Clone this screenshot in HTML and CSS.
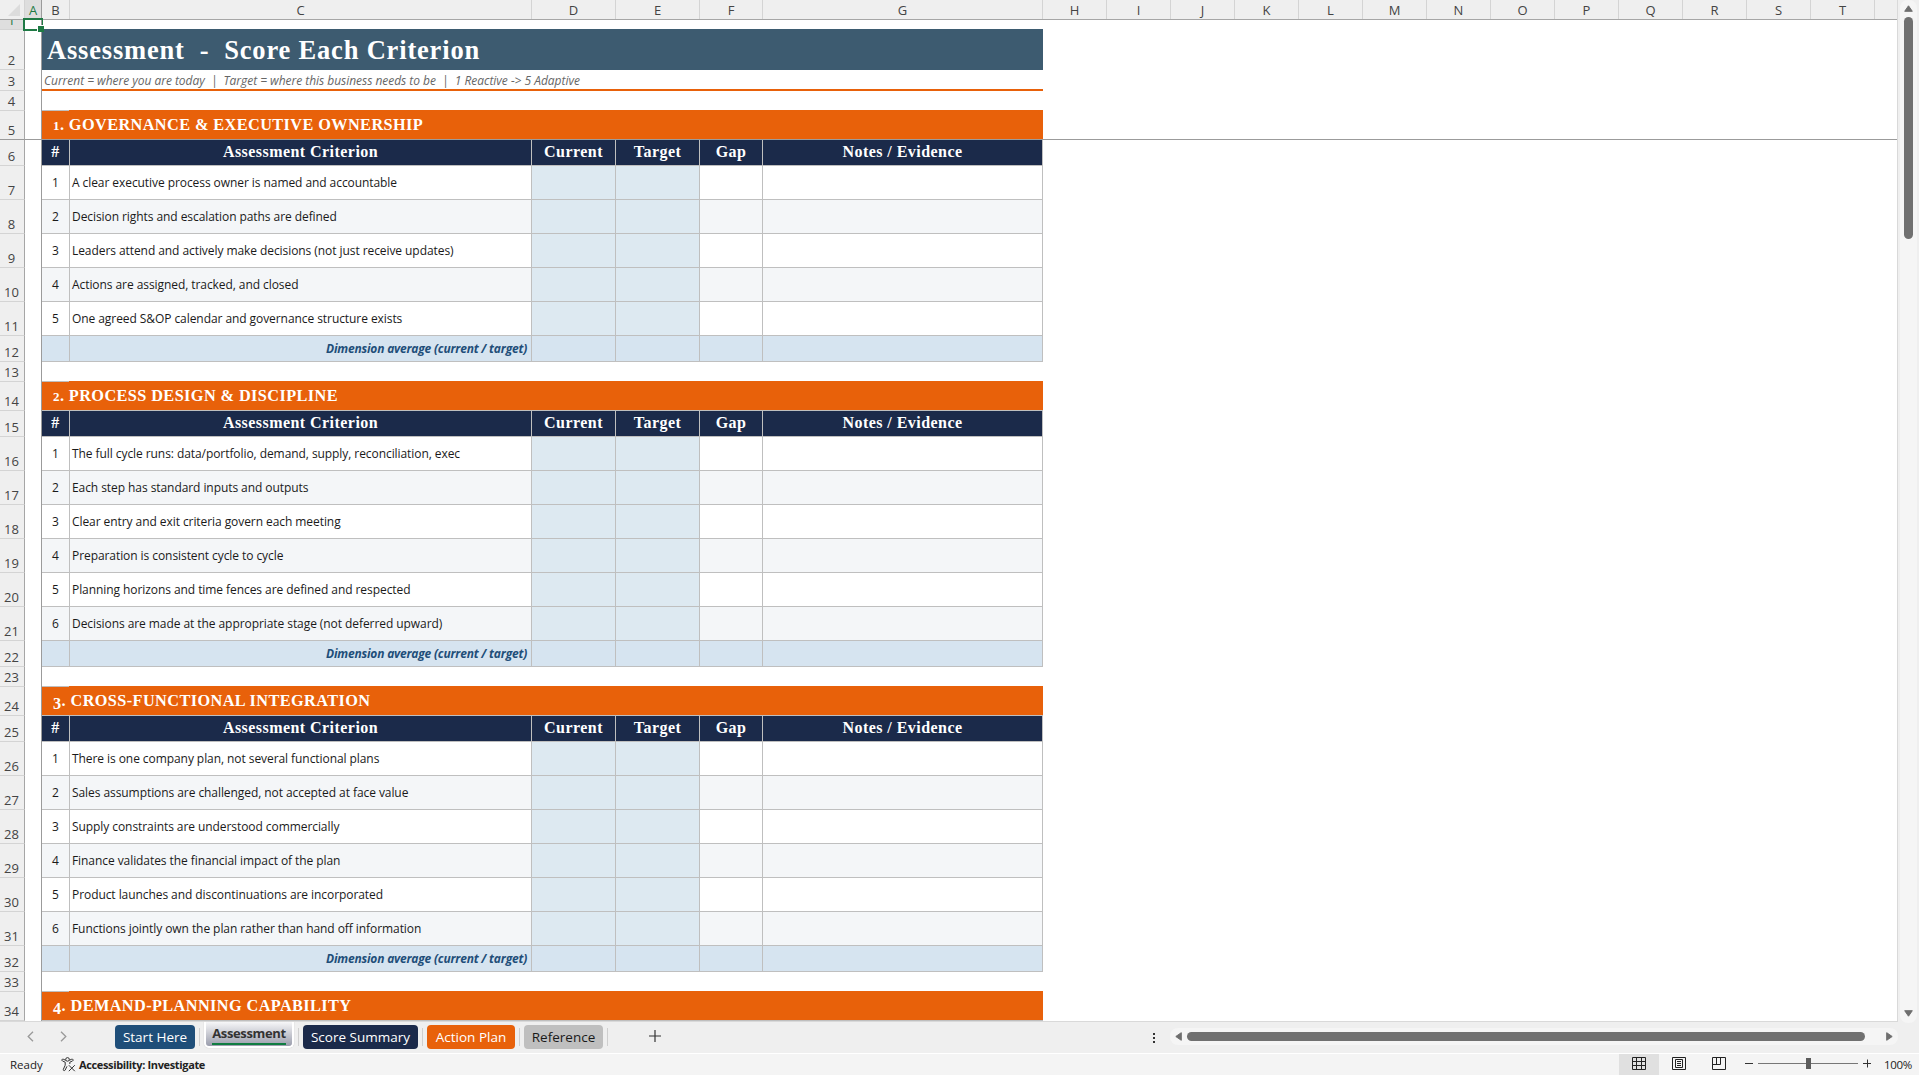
FILE: index.html
```html
<!DOCTYPE html>
<html lang="en">
<head>
<meta charset="utf-8">
<title>Assessment</title>
<link rel="stylesheet" href="styles.css">
</head>
<body>
<div class="app">
<div class="workspace">
<div class="sheet">
<div class="colheads">
<div class="corner"><svg width="12" height="12" viewBox="0 0 12 12"><path d="M12 0V12H0Z" fill="#dcdcdc"/></svg></div>
<div class="ch active">A</div><div class="ch">B</div><div class="ch">C</div><div class="ch">D</div><div class="ch">E</div><div class="ch">F</div><div class="ch">G</div><div class="ch">H</div><div class="ch">I</div><div class="ch">J</div><div class="ch">K</div><div class="ch">L</div><div class="ch">M</div><div class="ch">N</div><div class="ch">O</div><div class="ch">P</div><div class="ch">Q</div><div class="ch">R</div><div class="ch">S</div><div class="ch">T</div><div class="ch last"></div>
</div>
<div class="row first"><div class="rh active">1</div><div class="a"></div><div class="wide"></div></div>
<div class="row title"><div class="rh">2</div><div class="a"></div><div class="wide"><span class="t">Assessment&nbsp; -&nbsp; Score Each Criterion</span></div></div>
<div class="row note"><div class="rh">3</div><div class="a"></div><div class="wide"><span class="t">Current = where you are today&nbsp; |&nbsp; Target = where this business needs to be&nbsp; |&nbsp; 1 Reactive -&gt; 5 Adaptive</span></div></div>
<div class="row gap"><div class="rh">4</div><div class="a"></div><div class="wide"></div></div>
<div class="row section freeze"><div class="rh">5</div><div class="a"></div><div class="wide"><span class="t"><span class="num low">1</span>. GOVERNANCE &amp; EXECUTIVE OWNERSHIP</span></div><div class="rest"></div></div>
<div class="row head"><div class="rh">6</div><div class="a"></div><div class="c">#</div><div class="c">Assessment Criterion</div><div class="c">Current</div><div class="c">Target</div><div class="c">Gap</div><div class="c">Notes / Evidence</div></div>
<div class="row item"><div class="rh">7</div><div class="a"></div><div class="c n">1</div><div class="c text">A clear executive process owner is named and accountable</div><div class="c in"></div><div class="c in"></div><div class="c"></div><div class="c"></div></div>
<div class="row item alt"><div class="rh">8</div><div class="a"></div><div class="c n">2</div><div class="c text">Decision rights and escalation paths are defined</div><div class="c in"></div><div class="c in"></div><div class="c"></div><div class="c"></div></div>
<div class="row item"><div class="rh">9</div><div class="a"></div><div class="c n">3</div><div class="c text">Leaders attend and actively make decisions (not just receive updates)</div><div class="c in"></div><div class="c in"></div><div class="c"></div><div class="c"></div></div>
<div class="row item alt"><div class="rh">10</div><div class="a"></div><div class="c n">4</div><div class="c text">Actions are assigned, tracked, and closed</div><div class="c in"></div><div class="c in"></div><div class="c"></div><div class="c"></div></div>
<div class="row item"><div class="rh">11</div><div class="a"></div><div class="c n">5</div><div class="c text">One agreed S&amp;OP calendar and governance structure exists</div><div class="c in"></div><div class="c in"></div><div class="c"></div><div class="c"></div></div>
<div class="row avg"><div class="rh">12</div><div class="a"></div><div class="c"></div><div class="c label">Dimension average (current / target)</div><div class="c"></div><div class="c"></div><div class="c"></div><div class="c"></div></div>
<div class="row gap"><div class="rh">13</div><div class="a"></div><div class="wide"></div></div>
<div class="row section"><div class="rh">14</div><div class="a"></div><div class="wide"><span class="t"><span class="num low">2</span>. PROCESS DESIGN &amp; DISCIPLINE</span></div></div>
<div class="row head"><div class="rh">15</div><div class="a"></div><div class="c">#</div><div class="c">Assessment Criterion</div><div class="c">Current</div><div class="c">Target</div><div class="c">Gap</div><div class="c">Notes / Evidence</div></div>
<div class="row item"><div class="rh">16</div><div class="a"></div><div class="c n">1</div><div class="c text">The full cycle runs: data/portfolio, demand, supply, reconciliation, exec</div><div class="c in"></div><div class="c in"></div><div class="c"></div><div class="c"></div></div>
<div class="row item alt"><div class="rh">17</div><div class="a"></div><div class="c n">2</div><div class="c text">Each step has standard inputs and outputs</div><div class="c in"></div><div class="c in"></div><div class="c"></div><div class="c"></div></div>
<div class="row item"><div class="rh">18</div><div class="a"></div><div class="c n">3</div><div class="c text">Clear entry and exit criteria govern each meeting</div><div class="c in"></div><div class="c in"></div><div class="c"></div><div class="c"></div></div>
<div class="row item alt"><div class="rh">19</div><div class="a"></div><div class="c n">4</div><div class="c text">Preparation is consistent cycle to cycle</div><div class="c in"></div><div class="c in"></div><div class="c"></div><div class="c"></div></div>
<div class="row item"><div class="rh">20</div><div class="a"></div><div class="c n">5</div><div class="c text">Planning horizons and time fences are defined and respected</div><div class="c in"></div><div class="c in"></div><div class="c"></div><div class="c"></div></div>
<div class="row item alt"><div class="rh">21</div><div class="a"></div><div class="c n">6</div><div class="c text">Decisions are made at the appropriate stage (not deferred upward)</div><div class="c in"></div><div class="c in"></div><div class="c"></div><div class="c"></div></div>
<div class="row avg"><div class="rh">22</div><div class="a"></div><div class="c"></div><div class="c label">Dimension average (current / target)</div><div class="c"></div><div class="c"></div><div class="c"></div><div class="c"></div></div>
<div class="row gap"><div class="rh">23</div><div class="a"></div><div class="wide"></div></div>
<div class="row section"><div class="rh">24</div><div class="a"></div><div class="wide"><span class="t"><span class="num drop">3</span>. CROSS-FUNCTIONAL INTEGRATION</span></div></div>
<div class="row head"><div class="rh">25</div><div class="a"></div><div class="c">#</div><div class="c">Assessment Criterion</div><div class="c">Current</div><div class="c">Target</div><div class="c">Gap</div><div class="c">Notes / Evidence</div></div>
<div class="row item"><div class="rh">26</div><div class="a"></div><div class="c n">1</div><div class="c text">There is one company plan, not several functional plans</div><div class="c in"></div><div class="c in"></div><div class="c"></div><div class="c"></div></div>
<div class="row item alt"><div class="rh">27</div><div class="a"></div><div class="c n">2</div><div class="c text">Sales assumptions are challenged, not accepted at face value</div><div class="c in"></div><div class="c in"></div><div class="c"></div><div class="c"></div></div>
<div class="row item"><div class="rh">28</div><div class="a"></div><div class="c n">3</div><div class="c text">Supply constraints are understood commercially</div><div class="c in"></div><div class="c in"></div><div class="c"></div><div class="c"></div></div>
<div class="row item alt"><div class="rh">29</div><div class="a"></div><div class="c n">4</div><div class="c text">Finance validates the financial impact of the plan</div><div class="c in"></div><div class="c in"></div><div class="c"></div><div class="c"></div></div>
<div class="row item"><div class="rh">30</div><div class="a"></div><div class="c n">5</div><div class="c text">Product launches and discontinuations are incorporated</div><div class="c in"></div><div class="c in"></div><div class="c"></div><div class="c"></div></div>
<div class="row item alt"><div class="rh">31</div><div class="a"></div><div class="c n">6</div><div class="c text">Functions jointly own the plan rather than hand off information</div><div class="c in"></div><div class="c in"></div><div class="c"></div><div class="c"></div></div>
<div class="row avg"><div class="rh">32</div><div class="a"></div><div class="c"></div><div class="c label">Dimension average (current / target)</div><div class="c"></div><div class="c"></div><div class="c"></div><div class="c"></div></div>
<div class="row gap"><div class="rh">33</div><div class="a"></div><div class="wide"></div></div>
<div class="row section"><div class="rh">34</div><div class="a"></div><div class="wide"><span class="t"><span class="num drop">4</span>. DEMAND-PLANNING CAPABILITY</span></div></div>
<div class="selection"></div>
</div>
<div class="vscroll">
<svg width="9" height="7" viewBox="0 0 9 7"><path d="M4.5 .8L8.3 6.3H.7Z" fill="#6e6e6e" stroke="#6e6e6e" stroke-linejoin="round"/></svg>
<div class="vthumb"></div>
<svg class="down" width="9" height="7" viewBox="0 0 9 7"><path d="M4.5 6.2L8.3 .7H.7Z" fill="#6e6e6e" stroke="#6e6e6e" stroke-linejoin="round"/></svg>
</div>
</div>
<div class="tabbar">
<div class="nav">
<svg width="7" height="11" viewBox="0 0 7 11"><path d="M6 .8L1.2 5.5L6 10.2" fill="none" stroke="#999" stroke-width="1.3"/></svg>
<svg width="7" height="11" viewBox="0 0 7 11"><path d="M1 .8L5.8 5.5L1 10.2" fill="none" stroke="#999" stroke-width="1.3"/></svg>
</div>
<div class="tabs">
<div class="tab blue"><span>Start Here</span></div><div class="sep"></div>
<div class="tab current"><span>Assessment</span></div><div class="sep"></div>
<div class="tab navy"><span>Score Summary</span></div><div class="sep"></div>
<div class="tab orange"><span>Action Plan</span></div><div class="sep"></div>
<div class="tab grey"><span>Reference</span></div><div class="sep"></div>
</div>
<svg class="add" width="12" height="12" viewBox="0 0 12 12"><path d="M6 0V12M0 6H12" stroke="#333" stroke-width="1.2"/></svg>
<svg class="dots" width="2" height="10" viewBox="0 0 2 10"><path d="M0 0h2v2H0zM0 4h2v2H0zM0 8h2v2H0z" fill="#333"/></svg>
<div class="hscroll">
<svg width="7" height="9" viewBox="0 0 7 9"><path d="M.8 4.5L6.3 .7V8.3Z" fill="#6e6e6e" stroke="#6e6e6e" stroke-linejoin="round"/></svg>
<div class="hthumb"></div>
<svg width="7" height="9" viewBox="0 0 7 9"><path d="M6.2 4.5L.7 .7V8.3Z" fill="#6e6e6e" stroke="#6e6e6e" stroke-linejoin="round"/></svg>
</div>
</div>
<div class="status">
<span class="ready">Ready</span>
<svg class="a11y" width="15" height="15" viewBox="0 0 15 15" fill="none" stroke="#333" stroke-width="1"><circle cx="6.5" cy="2.4" r="1.8"/><path d="M4.8 3.3L2.2 2.2C.8 1.8 .3 3.4 1.5 4L4.2 5.2V8.2L2.3 12.4C2 13.8 3.6 14.2 4.2 13L6 9.3M8.2 3.3L10.8 2.2C12.2 1.8 12.7 3.4 11.5 4L8.8 5.2V7M7.8 8.2L13.8 14.2M13.8 8.2L7.8 14.2"/></svg>
<span class="access">Accessibility: Investigate</span>
<div class="views">
<div class="view on"><svg width="14" height="14" viewBox="0 0 14 14" fill="none" stroke="#222"><path d="M.5 .5h13v12H.5zM4.5 .5v12M9.5 .5v12M.5 4.5h13M.5 8.5h13"/></svg></div>
<div class="view"><svg width="14" height="14" viewBox="0 0 14 14" fill="none" stroke="#222"><path d="M.5 .5h13v12H.5zM3.5 2.5h7v8h-7zM5 4.5h4M5 6.5h4M5 8.5h4"/></svg></div>
<div class="view"><svg width="14" height="14" viewBox="0 0 14 14" fill="none" stroke="#222"><path d="M.5 .5h13v12H.5zM.5 7.5h8v-7M4.5 .5v7"/></svg></div>
</div>
<svg class="zoom" width="126" height="12" viewBox="0 0 126 12"><path d="M0 5.5H8M118 5.5H126M122.5 1.5V9.5" stroke="#333"/><path d="M13 5.5H113" stroke="#777"/><path d="M61 0h5v11h-5z" fill="#5c5c5c"/></svg>
<span class="pct">100%</span>
</div>
</div>
</body>
</html>
```
FILE: styles.css
```css
* { box-sizing: border-box; }
body { margin: 0; background: #efefef; overflow: hidden; font-family: "Open Sans", "Noto Sans", sans-serif; color: #222; }
svg { display: block; flex: none; }
.app { width: 1919px; height: 1075px; display: flex; flex-direction: column; }
.workspace { display: flex; height: 1022px; }
.sheet { position: relative; width: 1898px; background: #fff; border-right: 1px solid #d9d9d9; border-bottom: 1px solid #d9d9d9; overflow: hidden; }

.colheads { display: grid; grid-template-columns: 25px 17px 28px 462px 84px 84px 63px 280px repeat(13, 64px) 1fr; height: 20px; background: #efefef; border-bottom: 1px solid #a6a6a6; }
.ch { font-size: 13px; line-height: 21px; text-align: center; color: #444; border-right: 1px solid #d4d4d4; height: 19px; white-space: nowrap; }
.ch.active { background: #dedede; color: #1f7a45; border-right-color: #9b9b9b; }
.ch.last { border-right: 0; }
.corner { display: flex; justify-content: flex-end; align-items: flex-end; padding: 0 4px 3px 0; border-right: 1px solid #d4d4d4; }

.row { display: grid; grid-template-columns: 25px 17px 28px 462px 84px 84px 63px 280px 1fr; height: 34px; }
.row > div { min-width: 0; min-height: 0; }
.wide { grid-column: 3 / 9; display: flex; align-items: center; white-space: pre; }
.rh { display: flex; align-items: flex-end; justify-content: center; overflow: hidden; padding: 0 1px 1px 0; font-size: 13px; line-height: 16px; color: #444; background: #efefef; border-right: 1px solid #a6a6a6; border-bottom: 1px solid #d4d4d4; }
.rh.active { background: #dedede; color: #1f7a45; }
.a { border-right: 1px solid #9b9b9b; }

.first { height: 10px; }
.first .wide { border-bottom: 1px solid #3d5b70; }
.title { height: 40px; }
.title .wide { background: #3d5b70; color: #fff; font: bold 26.5px "Liberation Serif", serif; letter-spacing: .82px; padding-left: 5px; }
.note { height: 21px; }
.note .wide { border-bottom: 2px solid #e8610a; color: #666; font-size: 12px; font-style: italic; letter-spacing: -.03px; padding: 1px 0 0 2px; }
.gap { height: 20px; }
.gap .wide { border-style: solid; border-width: 0 0 1px; border-image: linear-gradient(to right, #bfbfbf 28px, #e8610a 28px) 1; }

.section { height: 29px; }
.section .wide { background: #e8610a; color: #fff; border-bottom: 1px solid #bfbfbf; font: bold 16.3px "Liberation Serif", serif; letter-spacing: .4px; padding-left: 11px; }
.num { display: inline-block; }
.low { font-size: 13px; }
.drop { transform: translateY(3px); }
.freeze > div { border-bottom: 1px solid #9b9b9b; }
.freeze .wide { border-bottom-color: #9b9b9b; }

.c { display: flex; align-items: center; border-right: 1px solid #bfbfbf; border-bottom: 1px solid #bfbfbf; white-space: pre; }
.head { height: 26px; }
.head .c { justify-content: center; background: #1b2a4a; color: #fff; font: bold 16px "Liberation Serif", serif; letter-spacing: .45px; padding-bottom: 1px; }
.item .c { font-size: 12px; color: #1a1a1a; letter-spacing: -.07px; }
.item .n { justify-content: center; }
.item .text { padding-left: 2px; }
.alt .c { background: #f4f6f8; }
.item .in { background: #dde9f1; }
.avg { height: 26px; }
.avg .c { background: #d6e4f0; color: #1f4e79; font-size: 12px; font-weight: bold; font-style: italic; letter-spacing: -.2px; }
.avg .label { justify-content: flex-end; padding-right: 4px; }

.selection { position: absolute; left: 23px; top: 18px; width: 20px; height: 13px; border: 2px solid #1f7a45; border-right-width: 1px; }
.selection::after { content: ""; position: absolute; right: -2px; bottom: -3px; width: 6px; height: 6px; background: #1f7a45; border: solid #fff; border-width: 1px 0 0 1px; }

.vscroll { width: 17px; height: 1023px; margin-left: 2px; background: #f5f5f5; border-radius: 8px; display: flex; flex-direction: column; align-items: center; padding: 5px 0 6px; }
.vthumb { width: 9px; height: 222px; margin-top: 5px; border-radius: 5px; background: #707070; }
.down { margin-top: auto; }

.tabbar { height: 32px; display: flex; align-items: flex-start; border-bottom: 1px solid #fff; }
.nav { display: flex; gap: 26px; width: 115px; padding: 9px 0 0 27px; }
.tabs { display: flex; align-items: flex-start; }
.tab { height: 24px; margin-top: 3px; border-radius: 4px; display: flex; align-items: center; justify-content: center; font-size: 13.5px; color: #fff; white-space: nowrap; }
.blue { width: 80px; background: #1f4e79; }
.navy { width: 115px; background: #1b2a4a; }
.orange { width: 88px; background: #e8610a; }
.grey { width: 79px; background: #bfbfbf; color: #1a1a1a; }
.current { width: 90px; height: 27px; margin-top: -1px; border: 1px solid #fff; border-width: 0 2px 2px; background: linear-gradient(#fafafb, #9a9dac); color: #333; font-weight: bold; font-size: 13px; letter-spacing: -.35px; box-shadow: 0 0 1px #aaa; border-radius: 0 0 5px 5px; }
.current span { border-bottom: 2px solid #107c41; line-height: 19px; padding-top: 2px; }
.sep { width: 1px; height: 18px; margin: 6px 4px 0; background: #cfcfcf; }
.add { margin: 8px 0 0 37px; }
.dots { margin: 11px 15px 0 auto; }
.hscroll { display: flex; align-items: center; width: 728px; height: 17px; margin: 6px 21px 0 0; padding: 0 5px; border-radius: 8px; background: #f5f5f5; }
.hthumb { width: 678px; height: 9px; margin: 0 auto 0 5px; border-radius: 5px; background: #707070; }

.status { flex: 1; display: flex; align-items: center; background: #f4f4f4; font-size: 11.5px; white-space: nowrap; padding-bottom: 1px; }
.ready { width: 61px; padding-left: 10px; }
.a11y { margin-right: 3px; }
.access { font-weight: bold; font-size: 11px; letter-spacing: -.35px; }
.views { display: flex; align-self: stretch; margin: 0 0 -1px auto; }
.view { width: 40px; display: flex; justify-content: center; padding-top: 3px; }
.on { background: #e0e0e0; }
.zoom { margin: 0 13px 0 6px; }
.pct { width: 35px; font-size: 11.5px; letter-spacing: -.3px; }
```
